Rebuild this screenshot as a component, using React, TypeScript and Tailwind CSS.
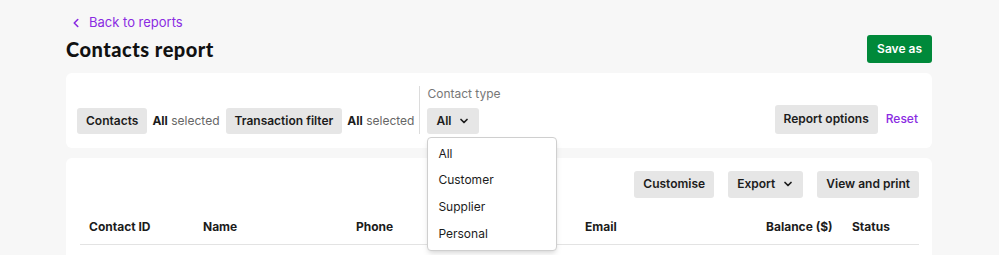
import React from 'react';
import { ChevronDown, ChevronLeft } from 'lucide-react';

const font = { fontFamily: 'Inter, "Noto Sans", sans-serif' };

// Grey action button used all over the report page
const GreyButton: React.FC<{ children: React.ReactNode; className?: string }> = ({ children, className = '' }) => (
  <button
    className={`h-[26px] rounded-[3px] bg-[#e6e6e6] px-[9px] text-[12px] font-semibold text-[#1c1c1c] inline-flex items-center whitespace-nowrap ${className}`}
  >
    {children}
  </button>
);

const columns = [
  { label: 'Contact ID', align: 'text-left' },
  { label: 'Name', align: 'text-left' },
  { label: 'Phone', align: 'text-left' },
  { label: 'Email', align: 'text-left' },
  { label: 'Balance ($)', align: 'text-right' },
  { label: 'Status', align: 'text-left pl-[11px]' }
];

const contactTypes = ['All', 'Customer', 'Supplier', 'Personal'];

export default function App() {
  return (
    <div style={font} className="min-h-[255px] w-full bg-[#f7f7f7] pl-[66px] pr-[67px] pt-[13px] text-[#1c1c1c]">
      {/* Header */}
      <a href="#" className="flex items-center gap-[6px] pl-[3px] text-[13px] text-[#8a2be2]">
        <ChevronLeft size={14} strokeWidth={2.75} />
        <span>Back to reports</span>
      </a>
      <div className="mt-[1px] flex items-center justify-between">
        <h1
          className="text-[20px] tracking-[0.5px] text-[#111]"
          style={{ fontFamily: 'Lato, Inter, sans-serif', fontWeight: 900 }}
        >
          Contacts report
        </h1>
        <button className="h-[28px] rounded-[3px] bg-[#00893a] px-[10px] text-[12px] font-semibold text-white">
          Save as
        </button>
      </div>

      {/* Filters */}
      <div className="mt-[9px] flex h-[75px] items-end justify-between rounded-[6px] bg-white pl-[11px] pr-[14px] pb-[14px]">
        <div className="flex items-end">
          <GreyButton>Contacts</GreyButton>
          <span className="ml-[5px] mr-[6px] pb-[4px] text-[12px] text-[#666]">
            <b className="font-bold text-[#1c1c1c]">All</b> selected
          </span>
          <GreyButton>Transaction filter</GreyButton>
          <span className="ml-[5px] mr-[5px] pb-[4px] text-[12px] text-[#666]">
            <b className="font-bold text-[#1c1c1c]">All</b> selected
          </span>
          <div className="relative flex h-[48px] flex-col items-start justify-between border-l border-[#dcdcdc] pl-[7px]">
            <span className="text-[12px] leading-[16px] text-[#777]">Contact type</span>
            <GreyButton className="gap-[7px]">
              All <ChevronDown size={12} strokeWidth={3.5} />
            </GreyButton>
            {/* Open dropdown */}
            <div className="absolute left-[7px] top-[51px] z-10 w-[130px] rounded-[4px] border border-[#cfcfcf] bg-white py-[3px] shadow-md">
              {contactTypes.map((t) => (
                <div key={t} className="h-[26.7px] px-[10px] text-[12px] leading-[26.7px] text-[#1c1c1c]">
                  {t}
                </div>
              ))}
            </div>
          </div>
        </div>
        <div className="flex items-center gap-[8px]">
          <GreyButton className="h-[29px]">Report options</GreyButton>
          <a href="#" className="text-[12px] font-medium text-[#8a2be2]">Reset</a>
        </div>
      </div>

      {/* Report table */}
      <div className="mt-[10px] rounded-t-[6px] bg-white pl-[14px] pr-[13px] pt-[13px]">
        <div className="flex justify-end gap-[14px]">
          <GreyButton className="h-[27px]">Customise</GreyButton>
          <GreyButton className="h-[27px] gap-[7px]">
            Export <ChevronDown size={12} strokeWidth={3.5} />
          </GreyButton>
          <GreyButton className="h-[27px]">View and print</GreyButton>
        </div>
        <div className="mt-[13px] grid h-[34px] grid-cols-[114px_153px_229px_1fr_84px_78px] items-center border-b border-[#e3e3e3]">
          {columns.map((c) => (
            <div key={c.label} className={`whitespace-nowrap px-[9px] text-[12px] font-bold ${c.align}`}>
              {c.label}
            </div>
          ))}
        </div>
        <div className="h-[12px]" />
      </div>
    </div>
  );
}
